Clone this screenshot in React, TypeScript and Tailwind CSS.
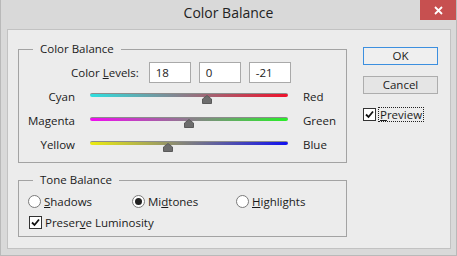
import React from "react"

const font = { fontFamily: '"Open Sans", "Noto Sans", sans-serif' }

function Slider({ left, right, from, to, value }: { left: string; right: string; from: string; to: string; value: number }) {
  const pct = ((value + 100) / 200) * 100
  return (
    <div className="grid h-[24px] grid-cols-[56px_198px_auto] items-center gap-x-[15px]">
      <span className="text-right">{left}</span>
      <div className="relative -mt-[4px] h-[4px]">
        <div
          className="h-[4px] rounded-full border-t border-[#8c8c8c]"
          style={{ background: `linear-gradient(to right, ${from}, ${to})` }}
        />
        <svg
          width="10"
          height="9"
          viewBox="0 0 10 9"
          className="absolute top-[2px] -translate-x-1/2"
          style={{ left: `${pct}%` }}
        >
          <polygon points="5,0.5 9.5,4 9.5,8.5 0.5,8.5 0.5,4" fill="#6d6d6d" stroke="#5a5a5a" strokeWidth="1" />
        </svg>
      </div>
      <span>{right}</span>
    </div>
  )
}

function NumBox({ value }: { value: string }) {
  return (
    <div className="flex h-[21px] w-[42px] items-center border border-[#a9a9a9] bg-white pl-[6px]">{value}</div>
  )
}

function Radio({ checked }: { checked?: boolean }) {
  return (
    <span className="flex h-[13px] w-[13px] items-center justify-center rounded-full border border-[#7a7a7a] bg-white">
      {checked && <span className="h-[7px] w-[7px] rounded-full bg-[#222]" />}
    </span>
  )
}

function Check() {
  return (
    <span className="flex h-[13px] w-[13px] items-center justify-center border border-[#333] bg-white">
      <svg width="9" height="9" viewBox="0 0 9 9">
        <path d="M1 4.5 L3.5 7 L8 1.5" fill="none" stroke="#111" strokeWidth="1.8" />
      </svg>
    </span>
  )
}

function Group({ title, className, children }: { title: string; className: string; children: React.ReactNode }) {
  return (
    <div className={`relative border border-[#a3a3a3] ${className}`}>
      <span className="absolute -top-[9px] left-[14px] bg-[#ececec] px-[7px] leading-[16px]">{title}</span>
      {children}
    </div>
  )
}

export default function App() {
  return (
    <div
      className="flex h-[256px] w-[457px] flex-col border-x border-b border-[#b9b9b9] bg-[#d9d9d9] text-[11.5px] text-[#1b1b1b]"
      style={font}
    >
      {/* Title bar */}
      <div className="grid h-[29px] grid-cols-[36px_1fr_36px] items-start">
        <div />
        <div className="pt-[3px] text-center text-[14px] leading-[20px] text-[#222]">Color Balance</div>
        <div className="flex h-[20px] items-center justify-center bg-[#c75050]">
          <svg width="9" height="9" viewBox="0 0 9 9">
            <path d="M1 1 L8 8 M8 1 L1 8" stroke="#fff" strokeWidth="1.8" />
          </svg>
        </div>
      </div>

      {/* Body */}
      <div className="ml-[6px] flex h-[220px] w-[444px] border border-[#c2c2c2] bg-[#ececec]">
        <div className="flex flex-col gap-[17px] pl-[10px] pt-[19px]">
          <Group title="Color Balance" className="h-[114px] w-[329px]">
            <div className="flex items-center gap-[8px] pt-[12px] pl-[52px]">
              <span className="mr-[2px]">
                Color <span className="underline">L</span>evels:
              </span>
              <NumBox value="18" />
              <NumBox value="0" />
              <NumBox value="-21" />
            </div>
            <div className="pt-[2px]">
              <Slider left="Cyan" right="Red" from="#2ee0e0" to="#f0102a" value={18} />
              <Slider left="Magenta" right="Green" from="#f00cf0" to="#28ee28" value={0} />
              <Slider left="Yellow" right="Blue" from="#ecec10" to="#1010f0" value={-21} />
            </div>
          </Group>

          <Group title="Tone Balance" className="h-[57px] w-[329px]">
            <div className="grid grid-cols-[104px_104px_104px] pl-[9px] pt-[12px]">
              <label className="flex items-center gap-[3px]">
                <Radio />
                <span>
                  <span className="underline">S</span>hadows
                </span>
              </label>
              <label className="flex items-center gap-[3px]">
                <Radio checked />
                <span>
                  Mi<span className="underline">d</span>tones
                </span>
              </label>
              <label className="flex items-center gap-[3px]">
                <Radio />
                <span>
                  <span className="underline">H</span>ighlights
                </span>
              </label>
            </div>
            <label className="flex items-center gap-[3px] pl-[10px] pt-[4px]">
              <Check />
              <span>
                Preser<span className="underline">v</span>e Luminosity
              </span>
            </label>
          </Group>
        </div>

        {/* Buttons */}
        <div className="flex flex-col pl-[16px] pt-[17px]">
          <button className="h-[18px] w-[75px] border border-[#3c8fdf] bg-[#efefef] leading-[14px]">OK</button>
          <button className="mt-[11px] h-[18px] w-[75px] border border-[#adadad] bg-[#e5e5e5] leading-[14px]">
            Cancel
          </button>
          <label className="mt-[13px] flex items-center gap-[2px]">
            <Check />
            <span className="border border-dotted border-[#222] px-[1px] leading-[13px]">
              <span className="underline">P</span>review
            </span>
          </label>
        </div>
      </div>
    </div>
  )
}
